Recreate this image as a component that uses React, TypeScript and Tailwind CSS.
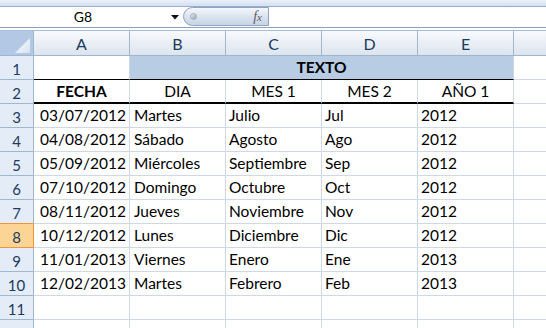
import React from "react";

const rows: string[][] = [
  ["03/07/2012", "Martes", "Julio", "Jul", "2012"],
  ["04/08/2012", "Sábado", "Agosto", "Ago", "2012"],
  ["05/09/2012", "Miércoles", "Septiembre", "Sep", "2012"],
  ["07/10/2012", "Domingo", "Octubre", "Oct", "2012"],
  ["08/11/2012", "Jueves", "Noviembre", "Nov", "2012"],
  ["10/12/2012", "Lunes", "Diciembre", "Dic", "2012"],
  ["11/01/2013", "Viernes", "Enero", "Ene", "2013"],
  ["12/02/2013", "Martes", "Febrero", "Feb", "2013"],
];

function RowHead({ n, selected, beforeSelected, h = "h-[24px]" }: { n: number | string; selected?: boolean; beforeSelected?: boolean; h?: string }) {
  const base = `${h} w-[34px] shrink-0 flex items-center justify-center border-r border-b text-[15px] leading-none pt-[3px]`;
  if (selected)
    return <div className={`${base} bg-[#fcd596] border-[#f29536] text-[#1d3a5f]`}>{n}</div>;
  return (
    <div className={`${base} bg-[#e4ecf7] border-r-[#9eb6ce] ${beforeSelected ? "border-b-[#f29536]" : "border-b-[#9eb6ce]"} text-[#1d3a5f]`}>{n}</div>
  );
}

function Cell({ children, className = "" }: { children?: React.ReactNode; className?: string }) {
  return (
    <div className={`h-[24px] w-[96px] shrink-0 border-r border-b border-[#d0d7e5] text-[15.5px] leading-[23px] text-black whitespace-nowrap overflow-hidden ${className}`}>
      {children}
    </div>
  );
}

function Filler({ className = "" }: { className?: string }) {
  return <div className={`h-[24px] flex-1 border-b border-[#d0d7e5] ${className}`} />;
}

export default function App() {
  return (
    <div className="w-[546px] h-[328px] overflow-hidden bg-white flex flex-col" style={{ fontFamily: "Lato, 'Open Sans', sans-serif" }}>
      {/* ribbon bottom */}
      <div className="h-[7px] shrink-0 bg-gradient-to-b from-[#e9f0f9] to-[#d4e0f0] border-b border-[#9aafca]" />
      {/* formula bar */}
      <div className="h-[20px] shrink-0 flex bg-white">
        <div className="w-[183px] shrink-0 flex items-center">
          <div className="w-[166px] text-center text-[14px] text-black leading-none">G8</div>
          <svg width="8" height="5" viewBox="0 0 8 5" className="ml-[5px]">
            <polygon points="0,0 8,0 4,4.5" fill="#111" />
          </svg>
        </div>
        <div className="w-[86px] shrink-0 h-[19px] rounded-l-full border border-[#8ea3c1] bg-gradient-to-b from-[#f4f7fb] via-[#dbe4f0] to-[#c7d4e6] flex items-center relative">
          <div className="w-[7px] h-[7px] rounded-full ml-[6px] bg-gradient-to-br from-[#e8eaee] to-[#9aa2ad] border border-[#a8b0bb]" />
          <span className="absolute right-[6px] top-[0px] text-[14px] italic text-[#5b5b5b] leading-[17px]" style={{ fontFamily: "'Liberation Serif', serif" }}>
            f<span className="text-[11px]">x</span>
          </span>
        </div>
        <div className="flex-1" />
      </div>
      <div className="h-[4px] shrink-0 border-t border-[#8da1bd] border-b border-b-[#a9bcd4] bg-white" />
      {/* column header */}
      <div className="h-[25px] shrink-0 flex">
        <div className="w-[34px] shrink-0 border-r border-b border-[#9eb6ce] bg-[#b2c8e5] relative">
          <svg className="absolute right-[3px] bottom-[2px]" width="15" height="15" viewBox="0 0 15 15">
            <defs>
              <linearGradient id="tri" x1="0" y1="0" x2="1" y2="1">
                <stop offset="0" stopColor="#ffffff" />
                <stop offset="1" stopColor="#d6e1ef" />
              </linearGradient>
            </defs>
            <polygon points="15,0 15,15 0,15" fill="url(#tri)" />
          </svg>
        </div>
        {["A", "B", "C", "D", "E"].map((c) => (
          <div key={c} className="w-[96px] shrink-0 border-r border-b border-[#9eb6ce] bg-gradient-to-b from-[#f8fafd] to-[#dce4ee] flex items-center justify-center text-[16px] text-[#1d3a5f] leading-none pt-[2px]">
            {c}
          </div>
        ))}
        <div className="flex-1 border-b border-[#9eb6ce] bg-gradient-to-b from-[#f8fafd] to-[#dce4ee]" />
      </div>
      {/* row 1 */}
      <div className="flex shrink-0">
        <RowHead n={1} />
        <Cell className="border-b-black" />
        <div className="h-[24px] w-[384px] shrink-0 border-r border-[#d0d7e5] border-b border-b-black bg-[#b8cce4] text-center font-bold text-[15.5px] leading-[23px] text-black">
          TEXTO
        </div>
        <Filler />
      </div>
      {/* row 2 */}
      <div className="flex shrink-0">
        <RowHead n={2} />
        <Cell className="border-b-2 border-b-black text-center font-bold leading-[22px]">FECHA</Cell>
        <Cell className="border-b-2 border-b-black text-center leading-[22px]">DIA</Cell>
        <Cell className="border-b-2 border-b-black text-center leading-[22px]">MES 1</Cell>
        <Cell className="border-b-2 border-b-black text-center leading-[22px]">MES 2</Cell>
        <Cell className="border-b-2 border-b-black text-center leading-[22px]">AÑO 1</Cell>
        <Filler />
      </div>
      {rows.map((r, i) => {
        const n = i + 3;
        return (
          <div key={n} className="flex shrink-0">
            <RowHead n={n} selected={n === 8} beforeSelected={n === 7} />
            <Cell className="text-right pr-[3px]">{r[0]}</Cell>
            <Cell className="pl-[4px]">{r[1]}</Cell>
            <Cell className="pl-[3px]">{r[2]}</Cell>
            <Cell className="pl-[3px]">{r[3]}</Cell>
            <Cell className="pl-[3px]">{r[4]}</Cell>
            <Filler />
          </div>
        );
      })}
      <div className="flex shrink-0">
        <RowHead n={11} />
        <Cell />
        <Cell />
        <Cell />
        <Cell />
        <Cell />
        <Filler />
      </div>
      <div className="flex shrink-0">
        <RowHead n={""} />
        <Cell />
        <Cell />
        <Cell />
        <Cell />
        <Cell />
        <Filler />
      </div>
    </div>
  );
}
